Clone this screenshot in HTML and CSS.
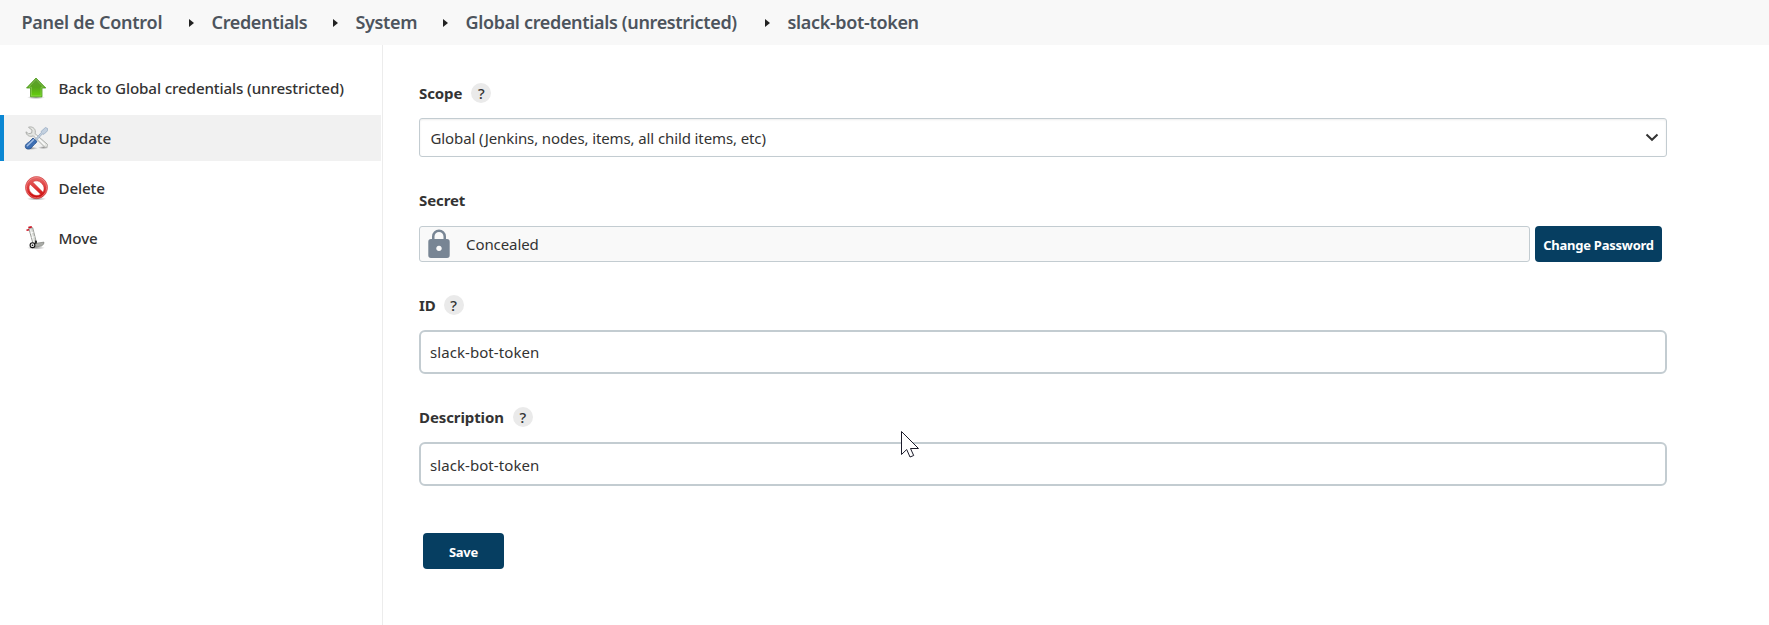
FILE: index.html
```html
<!DOCTYPE html>
<html lang="es">
<head>
<meta charset="utf-8">
<title>slack-bot-token</title>
<link rel="stylesheet" href="styles.css">
</head>
<body>
<nav class="breadcrumbs">
  <a class="crumb crumb-home"><span>Panel de Control</span></a><i class="sep"></i>
  <a class="crumb crumb-credentials"><span>Credentials</span></a><i class="sep"></i>
  <a class="crumb crumb-system"><span>System</span></a><i class="sep"></i>
  <a class="crumb crumb-domain"><span>Global credentials (unrestricted)</span></a><i class="sep"></i>
  <a class="crumb crumb-token"><span>slack-bot-token</span></a>
</nav>
<div class="page">
  <aside class="side">
    <a class="task">
      <svg class="icon" viewBox="0 0 24 24">
        <defs>
          <linearGradient id="green" x1="0" y1="0" x2="0" y2="1"><stop offset="0" stop-color="#5f9d35"/><stop offset=".5" stop-color="#57a51c"/><stop offset="1" stop-color="#66d40c"/></linearGradient>
          <radialGradient id="shadow"><stop offset="0" stop-color="#000" stop-opacity=".4"/><stop offset="1" stop-color="#000" stop-opacity="0"/></radialGradient>
        </defs>
        <ellipse cx="12" cy="21.400" rx="9" ry="1.800" fill="url(#shadow)"/>
        <path d="M12 2 21.800 12H18V20.800H6.500V12H2.500Z" fill="url(#green)" stroke="#4c9a1c" stroke-width=".8" stroke-linejoin="round"/>
        <path d="M12 3.300 19.500 11.200H17.100V19.900H7.400V11.200H4.800Z" fill="none" stroke="#a5dd75" stroke-width=".7" opacity=".7"/>
      </svg>
      <span class="task-back">Back to Global credentials (unrestricted)</span>
    </a>
    <a class="task task-active">
      <svg class="icon" viewBox="0 0 24 24">
        <ellipse cx="7" cy="22.300" rx="7" ry="1.600" fill="url(#shadow)"/>
        <ellipse cx="19.500" cy="21.600" rx="5.500" ry="1.500" fill="url(#shadow)"/>
        <path d="M4.500 1.300C7 .2 10.500 1.500 11.200 4.500 11.500 5.800 11.300 7 11.100 7.700L23.300 18.200C24.500 20 22.500 22.200 20.500 21L9.300 9.800C6 11.300 2 9.400 2 5.800L4.600 7.800 7.700 7 8 4.100Z" fill="#e4e5e2" stroke="#a6a8a5" stroke-width=".9" stroke-linejoin="round"/>
        <path d="M11.500 9.800 20.800 18.700" stroke="#fafafa" stroke-width="1.300"/>
        <path d="M11.300 13.200 17.300 6.500 17.200 5.300 21.400 1.500 23.600 2.500 23.600 4.700 20 8.300 18.400 7.900 12.500 14.300Z" fill="#c3d0df" stroke="#91a6bf" stroke-width=".7"/>
        <path d="M9 12 13 15.600C12 17.500 10 18.300 8.500 20.500 7 23.400 2.500 24 1.400 21.300.7 18.500 3.300 17.300 5.400 15.700Z" fill="#3d6fb4" stroke="#204a87" stroke-width=".8"/>
        <path d="M9.500 13.700 3.300 19.700" stroke="#a3bee3" stroke-width="1.500" stroke-linecap="round"/>
      </svg>
      <span>Update</span>
    </a>
    <a class="task">
      <svg class="icon" viewBox="0 0 24 24">
        <defs><linearGradient id="red" x1="0" y1="0" x2="0" y2="1"><stop offset="0" stop-color="#e56a6a"/><stop offset=".5" stop-color="#e03b3b"/><stop offset="1" stop-color="#c80000"/></linearGradient></defs>
        <ellipse cx="12.500" cy="22.900" rx="10" ry="1.500" fill="url(#shadow)"/>
        <path fill-rule="evenodd" d="M12.500.6a11 11 0 1 0 .01 0ZM8.600 5.900 19 16.300A7.700 7.700 0 0 0 8.600 5.900ZM6 8.100A7.700 7.700 0 0 0 16.700 18.300Z" fill="url(#red)" stroke="#c62020" stroke-width=".5"/>
        <circle cx="12.500" cy="11.600" r="10.200" fill="none" stroke="#f29a9a" stroke-width=".6"/>
      </svg>
      <span class="task-delete">Delete</span>
    </a>
    <a class="task">
      <svg class="icon" viewBox="0 0 24 24">
        <ellipse cx="12" cy="21.800" rx="9" ry="1.800" fill="url(#shadow)"/>
        <path d="M4.800 2.300 8.700 1.700 12.700 17.500 9.400 19Z" fill="#d6d8d3" stroke="#888a85" stroke-width=".8"/>
        <path d="M6.500 3.500 10 17M6.400 7 9.500 6.200M7.600 11.500 10.800 10.800" stroke="#fff" stroke-width=".8"/>
        <path d="M2.500 4.200 5 3.800M4.300 1.500 7.800.9" stroke="#cc1020" stroke-width="1.600"/>
        <path d="M10.300 17.600 20 16.100 19.600 18.200 17.500 20 10.500 21.200Z" fill="#aaaca8" stroke="#777974" stroke-width=".6"/>
        <path d="M11.300 14.300 13 15 12.700 17.500 10.500 18Z" fill="#222"/>
        <circle cx="8.500" cy="19.200" r="2.400" fill="#eee" stroke="#111" stroke-width="1.100"/><circle cx="8.500" cy="19.200" r=".8" fill="#111"/>
      </svg>
      <span>Move</span>
    </a>
  </aside>
  <main class="form">
    <div class="field">
      <div class="label"><span>Scope</span><b class="help">?</b></div>
      <div class="select"><span>Global (Jenkins, nodes, items, all child items, etc)</span>
        <svg class="chevron" viewBox="0 0 14 9"><path d="M1.500 1.500 7 6.800 12.500 1.500" fill="none" stroke="#333" stroke-width="2"/></svg>
      </div>
    </div>
    <div class="field">
      <div class="label label-secret"><span>Secret</span></div>
      <div class="secret-row">
        <div class="concealed">
          <svg class="lock" viewBox="0 0 22 29"><path fill-rule="evenodd" d="M4 10V7.500a7 7 0 0 1 14 0V10h1a2.700 2.700 0 0 1 2.700 2.700v13.600A2.700 2.700 0 0 1 19 29H3A2.700 2.700 0 0 1 .3 26.300V12.700A2.700 2.700 0 0 1 3 10ZM6.500 10h9V7.500a4.500 4.500 0 0 0-9 0ZM11 16.700a2.700 2.700 0 1 0 .01 0Z" fill="#788594"/></svg>
          <span>Concealed</span>
        </div>
        <button class="button button-change"><span>Change Password</span></button>
      </div>
    </div>
    <div class="field">
      <div class="label label-id"><span>ID</span><b class="help">?</b></div>
      <div class="input"><span>slack-bot-token</span></div>
    </div>
    <div class="field">
      <div class="label"><span>Description</span><b class="help">?</b></div>
      <div class="input input-description"><span>slack-bot-token</span></div>
    </div>
    <button class="button button-save"><span>Save</span></button>
  </main>
</div>
<svg class="pointer" viewBox="0 0 20 29"><path d="M1.500 1.500V24.500L6.700 19.500 10 27 13.700 25.500 10.500 18.500H18.500Z" fill="#fff" stroke="#1c1c2b" stroke-width="1"/></svg>
</body>
</html>
```
FILE: styles.css
```css
* { box-sizing: border-box; }
body {
  margin: 0;
  height: 625px;
  overflow: hidden;
  display: flex;
  flex-direction: column;
  background: #fff;
  color: #333;
  font: 16px/20px "Noto Sans", "Open Sans", sans-serif;
}
.breadcrumbs {
  height: 45px;
  flex: none;
  display: flex;
  align-items: center;
  padding-left: 21.500px;
  background: #f8f8f8;
  color: #4d545d;
  font-size: 18px;
  font-weight: 600;
  white-space: nowrap;
}
.crumb { letter-spacing: -.34px; padding-bottom: 2px; }
.crumb-home { width: 167.500px; letter-spacing: -.26px; }
.crumb-credentials { width: 121px; }
.crumb-system { width: 87px; }
.crumb-domain { width: 299px; }
.sep {
  width: 5px;
  margin-right: 17.500px;
  border-left: 5px solid #222;
  border-top: 4.500px solid transparent;
  border-bottom: 4.500px solid transparent;
}
.crumb-credentials, .crumb-system, .crumb-domain { margin-right: .5px; }
.page { flex: 1; display: flex; }
.side {
  width: 383px;
  padding: 20px 1px 0 0;
  border-right: 1px solid #ececec;
  display: flex;
  flex-direction: column;
  gap: 4px;
}
.task {
  height: 46px;
  display: flex;
  align-items: center;
  gap: 10.500px;
  padding-left: 20px;
  border-left: 4px solid transparent;
  font-size: 15.200px;
  font-weight: 500;
  letter-spacing: -.13px;
  white-space: nowrap;
}
.task-active { background: #f1f1f1; border-color: #0b87d3; }
.icon { width: 24px; height: 24px; flex: none; }
.form { width: 1284px; padding: 38px 0 0 36px; }
.field { margin-bottom: 33px; }
.field:first-child { margin-bottom: 34px; }
.label {
  height: 20px;
  margin-bottom: 15px;
  display: flex;
  align-items: center;
  gap: 9px;
  font-size: 15px;
  font-weight: 700;
  letter-spacing: -.1px;
}
.label-secret { padding-bottom: 2px; }
.label-id { gap: 8px; }
.help {
  width: 20px;
  height: 20px;
  border-radius: 50%;
  background: #eaeaea;
  text-align: center;
  font-size: 15px;
  font-weight: 500;
}
.select {
  height: 39px;
  padding: 0 7px 0 10.500px;
  border: 1px solid #c3ccd1;
  border-radius: 3px;
  box-shadow: inset 0 1px 2px rgba(0, 0, 0, .08);
  display: flex;
  align-items: center;
  justify-content: space-between;
  font-size: 15px;
  letter-spacing: -.11px;
}
.chevron { width: 14px; height: 9px; }
.secret-row { display: flex; gap: 5px; }
.concealed {
  width: 1111px;
  height: 36px;
  padding-left: 8px;
  border: 1px solid #c3ccd1;
  border-radius: 3px;
  background: #f9f9f9;
  display: flex;
  align-items: center;
  gap: 16px;
  font-size: 15px;
  letter-spacing: -.08px;
}
.lock { width: 22px; height: 29px; margin-bottom: 2px; }
.button {
  height: 36px;
  padding: 2px 0 0;
  border: 0;
  border-radius: 4px;
  background: #063e61;
  color: #fff;
  font: 700 13px "Noto Sans", "Open Sans", sans-serif;
  letter-spacing: -.25px;
  white-space: nowrap;
}
.button-change { width: 127px; }
.button-save { width: 81px; margin: 14px 0 0 4px; }
.input {
  height: 44px;
  padding-left: 9px;
  border: 2px solid #c3ccd1;
  border-radius: 6px;
  display: flex;
  align-items: center;
  font-size: 15px;
  letter-spacing: .07px;
}
.input-description { padding-top: 2px; }
.pointer { position: absolute; left: 900px; top: 430px; width: 20px; height: 29px; }
```
